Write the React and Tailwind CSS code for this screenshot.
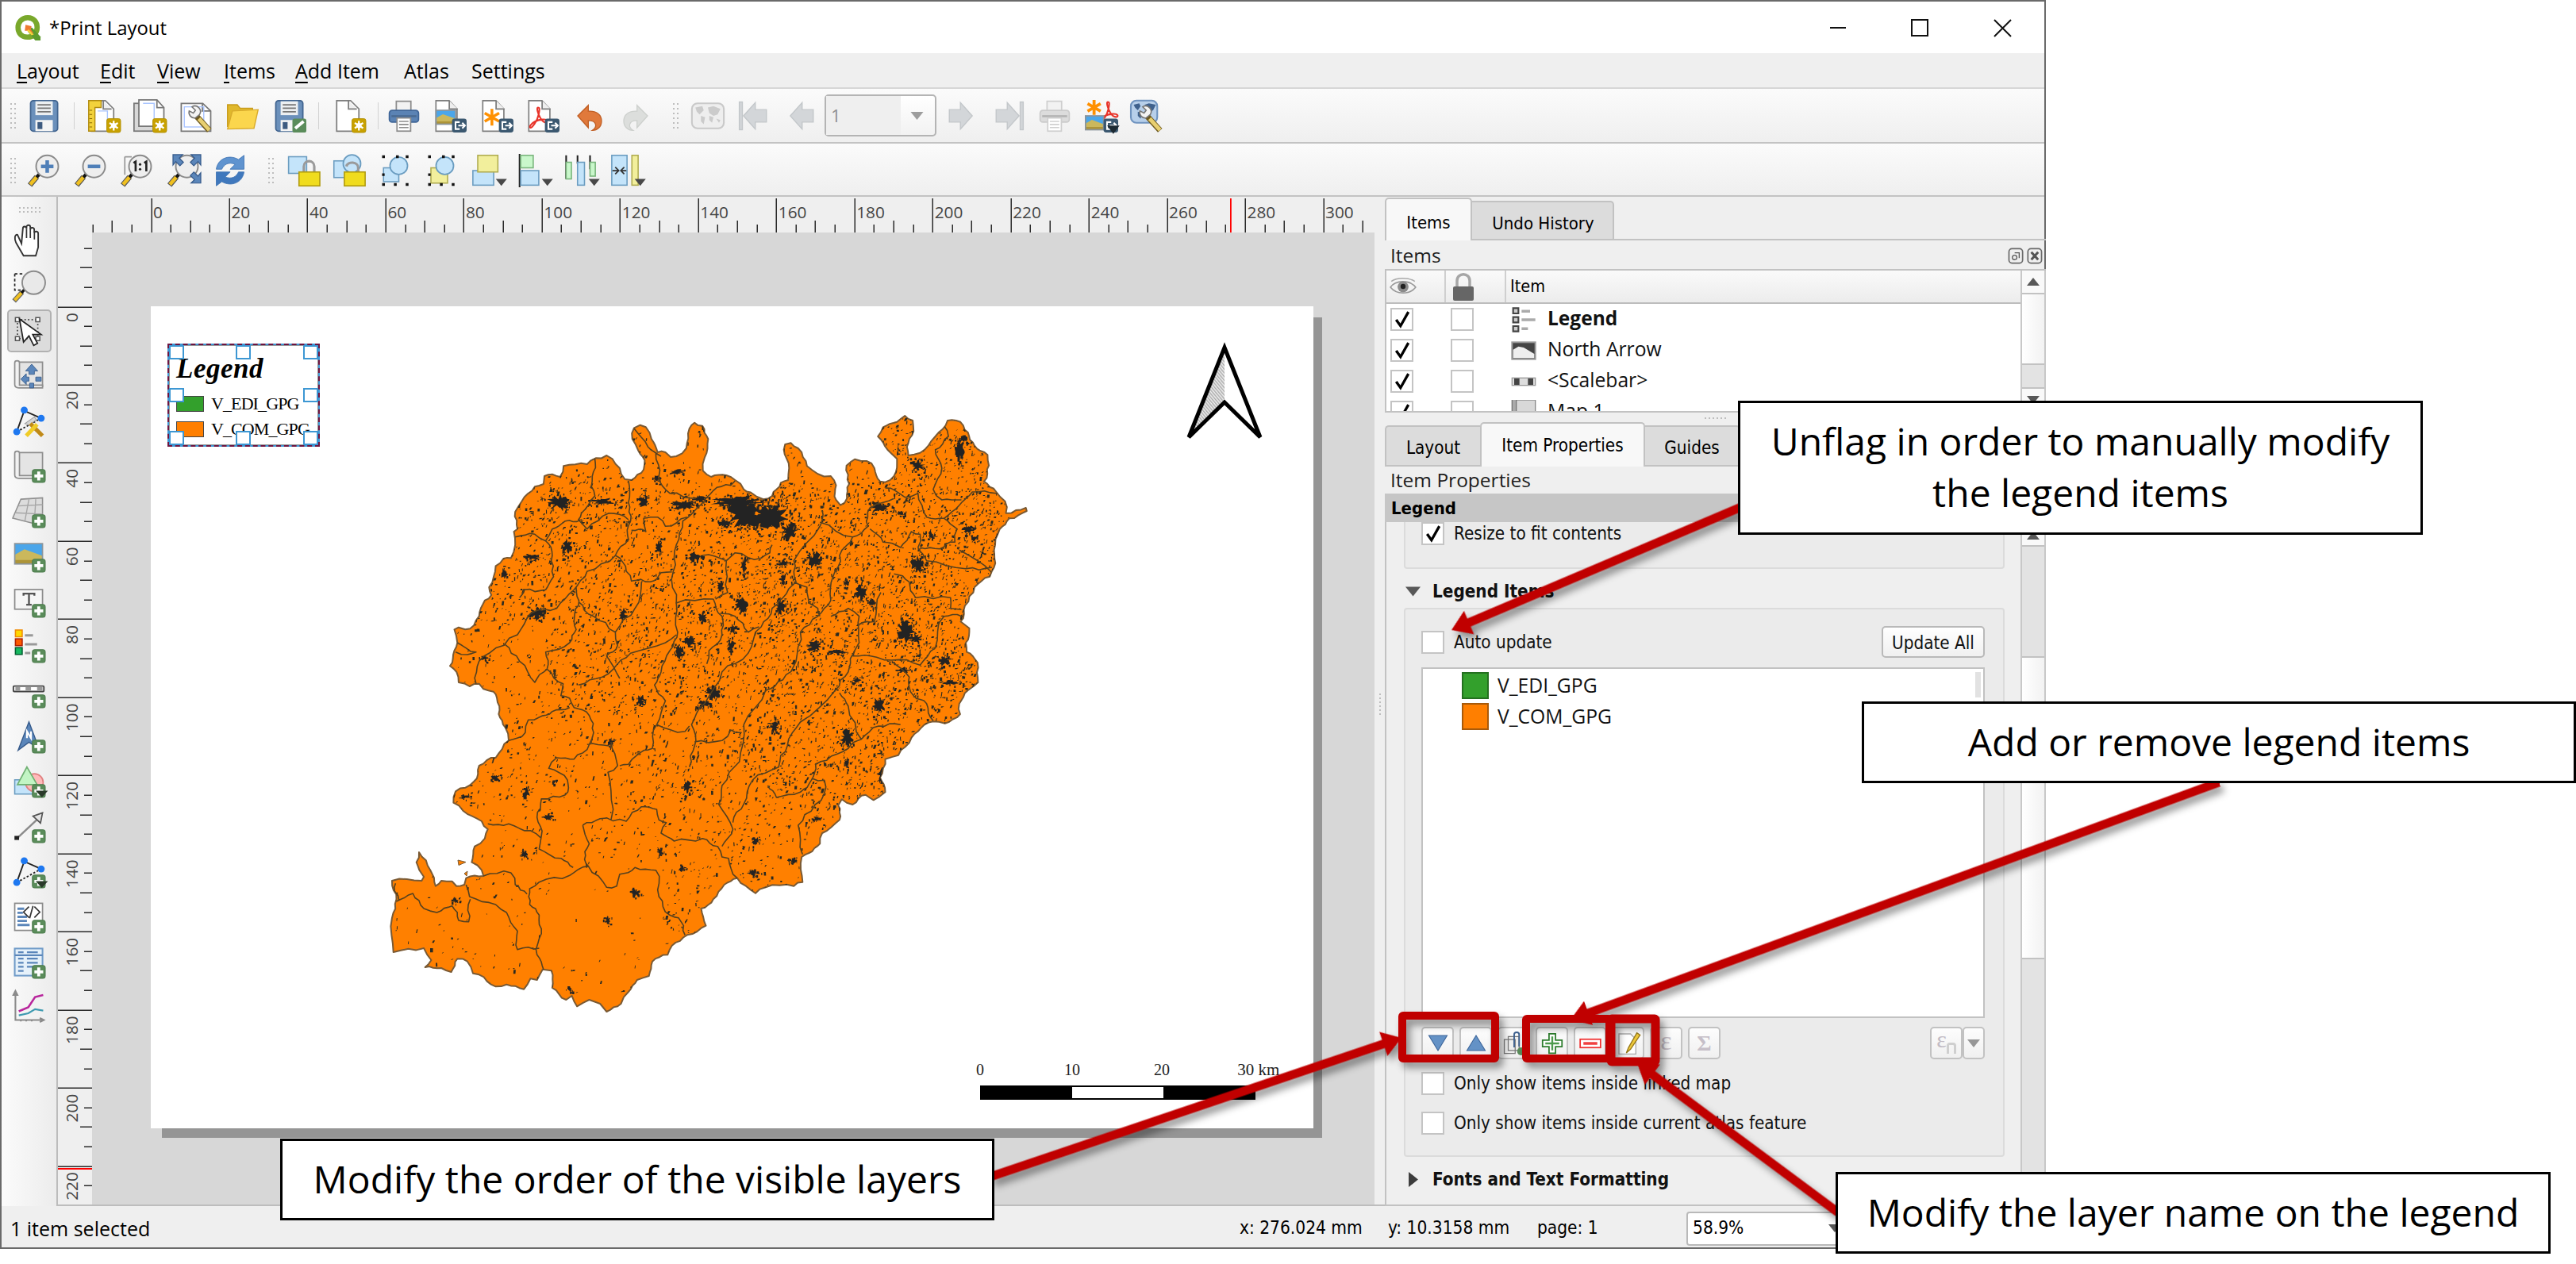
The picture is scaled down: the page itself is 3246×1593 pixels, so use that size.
import React from 'react';

/* ---------- deterministic map geometry ---------- */
function rng(seed) {
  let s = seed;
  return () => {
    s = (s * 1664525 + 1013904223) % 4294967296;
    return s / 4294967296;
  };
}
const px = (x) => x / 1.823 + 460;
const py = (y) => y / 3 + 500;

const OUTLINE = '195,1018 205,960 212,930 205,880 215,872 230,880 250,865 262,830 275,770 290,750 285,720 300,640 318,612 335,610 345,560 342,510 350,500 345,435 360,395 390,340 410,330 412,300 430,293 448,303 456,262 510,255 530,232 555,222 568,235 585,270 597,312 612,315 640,275 642,255 628,205 614,160 618,118 632,107 645,115 658,160 672,210 690,210 702,228 715,225 738,195 745,120 757,98 775,110 788,160 780,230 776,280 795,303 830,297 850,315 870,350 900,378 915,388 935,375 955,325 972,315 974,270 962,200 965,180 978,175 995,195 1015,262 1040,292 1070,300 1082,335 1082,390 1092,410 1107,385 1112,330 1106,260 1125,236 1152,243 1170,270 1183,320 1195,323 1215,300 1222,235 1200,200 1178,150 1190,115 1222,95 1240,72 1258,90 1260,130 1245,190 1248,222 1275,212 1310,150 1338,90 1358,90 1385,135 1400,185 1430,220 1433,260 1422,320 1450,360 1470,395 1472,440 1518,420 1520,432 1480,460 1458,500 1445,580 1445,645 1435,680 1400,720 1378,790 1368,850 1388,875 1380,930 1382,965 1407,1005 1408,1080 1385,1110 1365,1160 1367,1200 1332,1235 1305,1228 1285,1240 1255,1290 1225,1355 1195,1370 1183,1440 1195,1495 1168,1525 1150,1505 1120,1542 1095,1522 1087,1545 1090,1600 1050,1650 1045,1690 1020,1725 1003,1740 1005,1835 985,1850 920,1855 897,1877 875,1850 855,1820 825,1845 800,1900 772,1935 783,2000 740,2035 705,2075 695,2110 660,2135 652,2190 625,2205 605,2250 588,2295 555,2325 540,2295 515,2280 487,2305 475,2265 462,2280 430,2235 428,2170 408,2165 395,2205 380,2200 365,2240 345,2228 325,2222 300,2230 262,2185 248,2180 235,2135 212,2125 198,2175 175,2160 138,2157 152,2130 135,2085 65,2100 62,1970 72,1900 62,1830 130,1830 135,1815 118,1760 124,1722 150,1790 162,1850 175,1830 200,1832 210,1850 228,1845 232,1820 272,1812 268,1790 245,1760 252,1700 275,1670 282,1635 268,1605 225,1565 203,1535 208,1492 250,1455 262,1395 300,1365 330,1300 322,1250 307,1200 303,1140 295,1115 272,1105 262,1085 240,1095 215,1080 210,1040 195,1018';

const BORDERS = [
  '528,235 522,300 528,375 497,440 490,465 510,500 560,440 605,465',
  '605,318 605,400 610,470 605,540 575,600 510,660 480,730 440,800 380,820 350,900 285,970 262,1000 255,1085',
  '668,215 675,300 700,365 760,385',
  '850,318 840,335 800,355 770,410 730,470 715,560 708,660 715,780 718,890 700,960 680,1040 665,1090 690,1150 670,1240 660,1330 625,1355 605,1390 585,1395',
  '618,120 650,190 680,225',
  '345,530 390,520 415,545 430,600 433,680 415,730 365,730 355,760',
  '415,545 430,500 460,470 495,465',
  '575,600 600,660 612,697 655,700 680,665 705,662',
  '612,505 645,510 640,460 672,455 690,490 740,455',
  '485,720 490,790 480,850 485,880 470,930 415,965 418,1030 455,1085 450,1130 470,1140 480,1175 515,1205 525,1270 515,1315',
  '635,700 620,800 575,890 525,830 490,775',
  '575,890 580,940 555,980 585,1065',
  '320,935 355,1000 390,1080 418,1030',
  '470,1175 430,1190 400,1212 375,1222 368,1270 330,1300',
  '490,1090 545,1060 570,1030 610,970 690,930 715,900',
  '1050,430 1045,490 985,620 990,700 960,760 935,800 910,870 880,970 820,1040 780,1160 750,1240 757,1320 745,1400',
  '715,780 800,765 820,830 820,900 790,960 785,1010',
  '775,600 830,620 833,740 805,765',
  '830,620 850,590 910,610 930,590 935,560',
  '820,820 850,830 880,890 905,870',
  '1045,475 1120,530 1155,490 1160,420 1190,400 1215,385',
  '1120,530 1090,600 1075,680 1070,770 1040,830 1000,890 990,1000 960,1070 920,1110 870,1240 860,1380 820,1470 812,1540 845,1635 820,1700',
  '985,700 1015,720 1020,780 1040,800 1045,830',
  '1160,500 1190,550 1230,570 1255,510 1275,520 1270,570',
  '1195,345 1240,380 1270,365 1290,455 1330,460 1365,410 1395,360 1450,365',
  '1330,110 1340,150 1310,200 1325,270 1305,350 1325,390 1370,390',
  '1330,460 1360,500 1355,550 1320,575 1275,570',
  '1270,570 1290,620 1380,650 1440,645',
  '1365,580 1440,665',
  '1070,830 1110,800 1135,830 1135,930 1120,975 1110,1040 1080,1110 1000,1230 970,1320 950,1400 890,1450 870,1540 845,1610',
  '1120,980 1175,985 1245,995 1275,1015 1310,950 1330,830 1370,830',
  '1185,740 1170,850 1135,860',
  '1215,670 1250,700 1265,760 1345,760 1345,800 1370,805',
  '1210,1000 1250,1060 1260,1130 1290,1160 1305,1225',
  '1230,1240 1180,1245 1140,1295 1110,1330 1060,1375 1035,1390 1025,1450 1000,1495 945,1515 925,1470',
  '1090,1120 1110,1170 1140,1295',
  '1027,1443 1055,1450 1055,1500 1010,1580 995,1620 1005,1730',
  '670,1240 735,1265 745,1245',
  '757,1305 820,1300 840,1260 865,1270',
  '565,1305 580,1395 558,1420 570,1560 565,1600',
  '515,1315 480,1370 440,1365 422,1405 465,1450 460,1505 405,1520 395,1590 405,1660 400,1710 450,1745 478,1780',
  '510,1315 560,1320',
  '282,1615 330,1615 380,1640 405,1670',
  '500,1620 540,1595 600,1605 635,1550 670,1560 675,1600 692,1610 680,1650 710,1680 775,1670 810,1700 820,1740 835,1745 855,1820',
  '500,1620 515,1690 505,1720 513,1775 555,1855 578,1850 585,1805 620,1780 668,1790 675,1890 700,1960 720,1970 735,2035',
  '513,1775 470,1810 400,1835 378,1860 378,1920 400,1960 405,2030 395,2110 410,2165',
  '272,1812 335,1800 345,1845 372,1880',
  '232,1845 240,1890 300,1920 325,1950 350,2020 350,2090 400,2085',
  '72,1908 110,1878 135,1935 165,1950 200,1925 215,1980 238,1985 242,1900',
  '70,1840 68,1870 78,1905',
  '212,930 255,965 235,975 208,965',
];

const BLOBS = [
  [445, 400, 30, 28], [545, 395, 30, 14], [465, 565, 14, 28], [395, 818, 18, 22], [320, 670, 8, 22], [640, 395, 12, 20],
  [735, 410, 30, 26], [860, 400, 70, 26], [875, 445, 46, 56], [930, 450, 40, 48], [975, 510, 22, 34], [770, 388, 20, 12],
  [825, 480, 14, 20], [675, 565, 8, 26], [755, 605, 14, 20], [1035, 618, 16, 34], [1270, 262, 18, 22], [1365, 200, 12, 50],
  [1375, 160, 10, 14], [1180, 418, 24, 18], [1270, 635, 16, 34], [1140, 740, 18, 30], [1165, 778, 10, 14], [1240, 890, 22, 46], [1265, 915, 18, 16],
  [1035, 943, 20, 24], [865, 785, 14, 32], [953, 795, 12, 34], [592, 825, 8, 28], [775, 835, 10, 24], [745, 925, 18, 20],
  [722, 965, 10, 26], [840, 945, 8, 28], [800, 1120, 16, 34], [780, 1160, 16, 14], [1330, 998, 14, 20], [1238, 1035, 14, 10],
  [1180, 1170, 14, 34], [1130, 1072, 10, 12], [632, 1150, 8, 24], [940, 1250, 12, 22], [1108, 1290, 16, 34], [1108, 1385, 6, 20],
  [565, 1308, 8, 20], [368, 1503, 10, 22], [740, 1475, 10, 24], [230, 1512, 10, 8], [300, 1440, 10, 12], [365, 1730, 8, 16],
  [678, 1720, 8, 14], [620, 1875, 12, 16], [558, 1980, 8, 18], [208, 1905, 8, 10], [728, 1785, 8, 12], [1040, 1595, 10, 10],
  [898, 1680, 10, 16], [985, 1755, 8, 14], [1385, 500, 14, 16], [1300, 525, 8, 16], [870, 640, 8, 36], [1345, 1080, 20, 10],
  [275, 988, 10, 10], [715, 285, 18, 12], [670, 310, 8, 14], [1185, 1440, 5, 26], [1230, 440, 10, 8], [960, 630, 14, 12],
  [845, 880, 8, 20], [1085, 965, 24, 8], [385, 605, 20, 12], [815, 715, 8, 22], [960, 690, 8, 20], [1455, 540, 5, 34],
  [1105, 705, 6, 12], [1400, 535, 7, 12], [435, 1455, 4, 6], [890, 1800, 12, 10], [470, 2240, 6, 10], [422, 1590, 12, 14],
];

function parse(str) {
  return str.split(' ').map((p) => {
    const [a, b] = p.split(',').map(Number);
    return [px(a), py(b)];
  });
}
function rough(points, rand, amount) {
  let pts = points;
  for (let pass = 0; pass < 2; pass++) {
    const out = [pts[0]];
    for (let i = 1; i < pts.length; i++) {
      const [x0, y0] = pts[i - 1];
      const [x1, y1] = pts[i];
      const len = Math.hypot(x1 - x0, y1 - y0);
      if (len > 9) {
        const d = (rand() - 0.5) * Math.min(len * 0.3, amount);
        out.push([(x0 + x1) / 2 + ((y1 - y0) / len) * d, (y0 + y1) / 2 - ((x1 - x0) / len) * d]);
      }
      out.push([x1, y1]);
    }
    pts = out;
  }
  return 'M' + pts.map((p) => p[0].toFixed(1) + ' ' + p[1].toFixed(1)).join('L');
}
const r0 = rng(11);
const outlinePath = rough(parse(OUTLINE), r0, 4) + 'Z';
const borderPath = BORDERS.map((b) => rough(parse(b), r0, 6)).join('');

function density(x, y) {
  if (y < 320) return x > 1200 ? 0.7 : 0.3;
  if (y > 1750) return x > 680 ? 0.3 : x > 390 ? 0.06 : 0.07;
  if (y > 1560) return x > 850 ? 0.28 : x > 500 ? 0.24 : 0.13;
  if (y > 1200) {
    if (x > 860) return 0.7;
    if (x > 600) return 0.45;
    if (x > 400) return 0.22;
    return 0.36;
  }
  if (x < 420 && y > 850) return 0.22;
  if (x > 900) return 0.95;
  return 0.68;
}
function speckles() {
  const r = rng(77);
  let d = '';
  for (let i = 0; i < 19000; i++) {
    const x = 50 + r() * 1440;
    const y = 80 + r() * 2240;
    const w = 0.9 + r() * r() * 2.9;
    const h = 1 + r() * r() * 5;
    const s = (r() - 0.2) * -2.4;
    if (r() > density(x, y)) continue;
    d += `M${px(x).toFixed(1)} ${py(y).toFixed(1)}h${w.toFixed(1)}l${s.toFixed(1)} ${h.toFixed(1)}h${(-w).toFixed(1)}z`;
  }
  return d;
}
function blobs() {
  const r = rng(5);
  let d = '';
  BLOBS.forEach(([cx, cy, rx, ry]) => {
    const n = 26;
    const pts = [];
    for (let k = 0; k < n; k++) {
      const a = (k / n) * Math.PI * 2;
      const q = 0.35 + r() * 0.8;
      pts.push(px(cx + Math.cos(a) * rx * q).toFixed(1) + ' ' + py(cy + Math.sin(a) * ry * q).toFixed(1));
    }
    d += 'M' + pts.join('L') + 'Z';
    const extra = Math.round(6 + (rx * ry) / 40);
    for (let k = 0; k < extra; k++) {
      const a = r() * Math.PI * 2;
      const q = 0.5 + r() * 1;
      const w = 0.8 + r() * 2.2;
      const h = 0.8 + r() * 2.8;
      d += `M${px(cx + Math.cos(a) * rx * q).toFixed(1)} ${py(cy + Math.sin(a) * ry * q).toFixed(1)}h${w.toFixed(1)}v${h.toFixed(1)}h${(-w).toFixed(1)}z`;
    }
  });
  return d;
}
const specklePath = speckles();
const blobPath = blobs();

function RegionMap() {
  return (
    <svg className="absolute left-[290px] top-[130px]" width="830" height="770" viewBox="480 516 830 770">
      <defs>
        <clipPath id="region"><path d={outlinePath} /></clipPath>
      </defs>
      <path d={outlinePath} fill="#ff8000" stroke="#7a5a34" strokeWidth="2" strokeLinejoin="round" />
      <g clipPath="url(#region)">
        <path d={specklePath} fill="#2b2a20" />
        <path d={blobPath} fill="#232323" />
        <path d={borderPath} fill="none" stroke="#54401f" strokeWidth="1.6" strokeLinejoin="round" />
      </g>
      <path d="M577 1084l10 2.500-9 4zM585 1101l4-3-1 6z" fill="#ff8000" stroke="#7a5a34" />
    </svg>
  );
}

/* ---------- icon pieces ---------- */
function Ico({ children, s = 'size-[42px]' }) {
  return <svg viewBox="0 0 24 24" className={s + ' shrink-0 overflow-visible'} fill="none">{children}</svg>;
}
const Plus = () => (
  <g>
    <rect x="14.500" y="14.500" width="9.500" height="9.500" rx="1.800" fill="#5a8c5a" stroke="#4a7a4b" strokeWidth=".6" />
    <path d="M19.200 16v6.500M16 19.200h6.500" stroke="#fff" strokeWidth="2.200" />
  </g>
);
const Star = () => (
  <g>
    <rect x="14" y="14" width="10" height="10" rx="1.500" fill="#c8a100" stroke="#b08e00" strokeWidth=".5" />
    <path d="M19 15.500v7M16 17.200l6 3.600M22 17.200l-6 3.600" stroke="#fff" strokeWidth="1.300" />
    <circle cx="19" cy="19" r="1.900" fill="#fff" />
  </g>
);
const Exp = () => (
  <g>
    <rect x="13.500" y="14" width="10.500" height="10" rx="1.800" fill="#3b5870" />
    <path d="M19 16.500h-3v5h3M18 19h4.500M20.800 17l2 2-2 2" stroke="#fff" strokeWidth="1.200" />
  </g>
);
const Page = ({ x = 2 }) => (
  <g>
    <path d={`M${x} 1h10l6 6v16H${x}z`} fill="#fff" stroke="#7d7d7d" strokeWidth="1" transform={x === 2 ? 'scale(.95 1)' : undefined} />
    <path d="M11.500 1v6h6" fill="#eee" stroke="#7d7d7d" strokeWidth="1" />
  </g>
);
const Caret = () => <path d="M17 18h8l-4 5z" fill="#484848" />;
const Floppy = ({ children }) => (
  <Ico>
    <rect x="2" y="1" width="19.500" height="22" rx="2" fill="#6b90bb" stroke="#41648f" />
    <rect x="5.500" y="1.500" width="12.500" height="10" fill="#eceff1" />
    <path d="M7 4h9.500M7 6.500h9.500M7 9h9.500" stroke="#777" strokeWidth="1" />
    <rect x="5.500" y="15" width="12.500" height="8" fill="#f4f4f4" />
    <rect x="7" y="16.500" width="3.500" height="5" fill="#3d5b80" />
    {children}
  </Ico>
);
const Lens = ({ children, x = 14, y = 9, r = 8 }) => (
  <Ico>
    <path d="M1.500 22.500l5-6" stroke="#555" strokeWidth="4" />
    <path d="M1.800 22l4.800-5.600" stroke="#f0c020" strokeWidth="2.600" />
    <path d="M6.300 16.800l2.400-2.500" stroke="#111" strokeWidth="2.400" />
    <circle cx={x} cy={y} r={r} fill="#ededed" fillOpacity=".93" stroke="#8a8a8a" strokeWidth="1.100" />
    {children}
  </Ico>
);
const Wrench = () => (
  <g>
    <path d="M12 12.500l9 10" stroke="#6e5a20" strokeWidth="4.200" />
    <path d="M13.500 14l7.500 8.200" stroke="#e8cf70" strokeWidth="2.800" />
    <path d="M8.500 5.500a4 4 0 0 1 5.500 5.500l-3 2.500a4 4 0 0 1-4.500-5l3 1.500 1.500-2z" fill="#f4f4f4" stroke="#777" strokeWidth=".9" />
  </g>
);
const Printer = ({ body = '#5b83b4', edge = '#3f6597', paper = '#8c8c8c' }) => (
  <Ico>
    <rect x="6.500" y="1.500" width="10.500" height="8" fill="#f2f2f2" stroke={paper} />
    <rect x="1.500" y="8" width="21" height="8.500" rx="2" fill={body} stroke={edge} />
    <rect x="3" y="11.500" width="18" height="1.500" fill="#000" fillOpacity=".18" />
    <rect x="7" y="13.500" width="9.800" height="9.500" fill="#fff" stroke={paper} />
    <path d="M8.500 16h6.800M8.500 18.200h6.800M8.500 20.400h6.800" stroke={paper} strokeWidth=".9" />
  </Ico>
);
const Picture = ({ x = 1, y = 4, w = 21, h = 14 }) => (
  <g>
    <rect x={x} y={y} width={w} height={h} fill="#4ba6ea" />
    <path d={`M${x} ${y + h * 0.55}L${x + w * 0.35} ${y + h * 0.28}L${x + w} ${y + h * 0.6}V${y + h}H${x}z`} fill="#cbb85c" />
    <path d={`M${x} ${y + h * 0.8}H${x + w}V${y + h}H${x}z`} fill="#ad9438" />
    <rect x={x} y={y} width={w} height={h} stroke="#8b959c" strokeWidth="1" />
  </g>
);
const Flower = () => <path d="M8.500 7v12M3.300 10l10.400 6M13.700 10L3.300 16" stroke="#ff9000" strokeWidth="2" />;
const Acro = () => <path d="M8.500 6c-1 0-.5 4 2 8s6 3 5 1.500-6-1-9 .5S2 20 3 20.500 8 16 9 11s.5-5-.5-5z" stroke="#e8342a" strokeWidth="1.200" />;
const Scroll = () => (
  <g>
    <path d="M5 2h17v18H5" fill="#e4e4e4" stroke="#8d8d8d" />
    <path d="M1.500 2.500c0-2 3.500-2 3.500 0V19H22v2H4.500c-2 0-3-1-3-2.500z" fill="#f1f1f1" stroke="#8d8d8d" />
  </g>
);
const Nodes = () => (
  <g>
    <path d="M3 20L8.500 4.500 21 10" stroke="#222" strokeWidth="1.100" />
    <path d="M3 20L21 10" stroke="#222" strokeWidth="1.100" strokeDasharray="1.500 1.300" />
    <circle cx="3" cy="20" r="2.600" fill="#1e78f0" /><circle cx="8.500" cy="4" r="2.600" fill="#1e78f0" /><circle cx="21" cy="10" r="2.600" fill="#1e78f0" />
  </g>
);
const Handles = () => (
  <path d="M2 1h2v2H2zM19 1h2v2h-2zM2 21h2v2H2zM19 21h2v2h-2zM2 14h1.800v1.800H2zM10.500 21h2v2h-2zM12 1h2v2h-2z" fill="#111" />
);

const W = 'flex h-full w-[58.5px] shrink-0 items-center justify-center';
const Cell = ({ children }) => <div className={W}>{children}</div>;
const Sep = ({ c = 'w-[16.5px]' }) => (
  <div className={c + ' flex h-full shrink-0 items-center'}><div className="ml-[7px] h-[34px] w-px bg-[#d2d2d2]" /></div>
);
const Grip = ({ c = '' }) => (
  <div className={c + ' grid shrink-0 grid-cols-2 gap-x-[3px] gap-y-[4px]'}>
    {Array.from({ length: 12 }, (_, i) => <div key={i} className="size-[2px] bg-[#bdbdbd]" />)}
  </div>
);
const NavArrow = ({ flip, bar }) => (
  <Ico>
    <g fill="#d3d6d9" stroke="#c3c7ca" strokeWidth=".8" transform={flip ? 'translate(24 0) scale(-1 1)' : undefined}>
      <path d="M4.500 12L13 2.500V7.500h8V16.500h-8v5z" />
      {bar && <rect x="1.500" y="2" width="2.200" height="20" />}
    </g>
  </Ico>
);
const AtlasMap = ({ pale }) => (
  <g>
    <rect x={pale ? 0.5 : 0} y={pale ? 3 : 1} width={pale ? 23 : 19} height={pale ? 18 : 16} rx="4" fill={pale ? '#eee' : '#b7cfea'} stroke={pale ? '#c9c9c9' : '#6f93bf'} strokeWidth="1.200" />
    {pale ? (
      <path d="M3 6l5-1 1 3-3 3-2-2zM7 12l3 1-1 5-2-2zM12 6l4-1 5 2-2 4-3 1-3-2zM13 12l3 1-1 4-2-2zM18 14l3 1-1 2z" fill="#cbcbcb" />
    ) : (
      <path d="M2 4l4-1 1 2-2 3-2-2zM5 9l3 1-1 4-2-2zM10 4l3-1 5 1-2 4-2 1-3-2z" fill="#3f618d" />
    )}
  </g>
);

function MainToolbar() {
  return (
    <div className="flex h-[69px] w-full items-center border-b-2 border-[#c3c3c3] bg-gradient-to-b from-[#fbfbfb] to-[#efefef] pl-[11px]">
      <Grip c="mr-[7px]" />
      <Cell><Floppy /></Cell>
      <Sep c="w-[16px]" />
      <Cell>
        <Ico>
          <Page x={3} />
          <path d="M1 1h9v5H5.500v17H1z" fill="#f3d23b" stroke="#b08a10" strokeWidth=".8" />
          <path d="M1.500 8h2M1.500 11h2M1.500 14h2M1.500 17h2M1.500 20h2" stroke="#8a6a00" strokeWidth=".7" />
          <path d="M7.500 8.500h7v9" stroke="#a8c4ff" strokeWidth=".8" />
          <Star />
        </Ico>
      </Cell>
      <Cell>
        <Ico>
          <rect x=".5" y="3" width="17" height="20" fill="#d8d8d8" stroke="#777" />
          <path d="M4 .5h13l5 5.500v13.500H4z" fill="#fff" stroke="#777" />
          <path d="M17 .5V6h5" stroke="#777" />
          <path d="M7 3h8v13h8" stroke="#a8c4ff" strokeWidth=".8" />
          <Star />
        </Ico>
      </Cell>
      <Cell>
        <Ico>
          <path d="M.8 3h15.500L22 8.500V23H.8z" fill="#fff" stroke="#777" />
          <path d="M16 3v5.500h6" stroke="#777" />
          <rect x="3" y="5.500" width="14" height="14.500" stroke="#a8c4ff" strokeWidth=".8" />
          <Wrench />
        </Ico>
      </Cell>
      <Cell>
        <Ico>
          <path d="M1 20V4h7l2 2.500h9V10" fill="#e0b82c" stroke="#c89b1a" strokeWidth=".8" />
          <path d="M1 21.500L4.500 8.500 23 7.500l-3 13.500z" fill="#fbd64d" stroke="#d9ab2c" strokeWidth=".8" />
        </Ico>
      </Cell>
      <Cell>
        <Floppy>
          <rect x="14" y="14" width="10" height="10" rx="1.500" fill="#5a8c5a" />
          <path d="M16 21l6-5" stroke="#fff" strokeWidth="2.200" />
        </Floppy>
      </Cell>
      <Sep />
      <Cell><Ico><Page x={3} /><Star /></Ico></Cell>
      <Sep c="w-[10.5px]" />
      <Cell><Printer /></Cell>
      <Cell><Ico><Page /><Picture x={2} y={8} w={14} h={10} /><Exp /></Ico></Cell>
      <Cell><Ico><Page /><Flower /><Exp /></Ico></Cell>
      <Cell><Ico><Page /><Acro /><Exp /></Ico></Cell>
      <Cell>
        <Ico s="size-[40px]">
          <path d="M3 12L11 4v4.500c6-.5 10 2.500 10 7.500 0 4-3 7-7 7 1.500-1 3-2.500 2.500-4.500S14 15.500 11 15.500V21z" fill="#e0793b" stroke="#c05f25" strokeWidth=".8" />
        </Ico>
      </Cell>
      <Cell>
        <Ico s="size-[40px]">
          <path d="M21 12L13 4v4.500C7 8 3 11 3 16c0 4 3 7 7 7-1.500-1-3-2.500-2.500-4.500S10 15.500 13 15.500V21z" fill="#dcdedc" stroke="#cdd0cd" strokeWidth=".8" />
        </Ico>
      </Cell>
      <div className="w-[32px] shrink-0 pl-[17px]"><Grip c="w-[7px]" /></div>
      <Cell><Ico><AtlasMap pale /></Ico></Cell>
      <Cell><NavArrow bar /></Cell>
      <Cell><NavArrow /></Cell>
      <div className="ml-[1px] mr-[3px] flex h-[53px] w-[141px] shrink-0 items-center rounded-[5px] border-2 border-[#b4b4b4] bg-gradient-to-b from-white to-[#f2f2f2]">
        <div className="flex h-full w-[94px] items-center bg-[#efefef] pl-[6px] text-[22px] text-[#8f8f8f]">1</div>
        <svg viewBox="0 0 16 10" className="ml-[12px] h-[10px] w-[17px]"><path d="M0 0h16L8 10z" fill="#9d9d9d" /></svg>
      </div>
      <Cell><NavArrow flip /></Cell>
      <Cell><NavArrow flip bar /></Cell>
      <Cell><Printer body="#dcdcdc" edge="#cbcbcb" paper="#cfcfcf" /></Cell>
      <Cell>
        <Ico>
          <g transform="translate(-1 -4) scale(.9)"><path d="M8.500 5v12M3.300 8l10.400 6M13.700 8L3.300 14" stroke="#ff9000" strokeWidth="2.400" /></g>
          <g transform="translate(8 -4)"><Acro /></g>
          <Picture x={0.5} y={12} w={13} h={10} />
          <Exp />
          <path d="M16 19h9l-4.500 6z" fill="#1c2a33" />
        </Ico>
      </Cell>
      <Cell><Ico><AtlasMap /><Wrench /></Ico></Cell>
    </div>
  );
}

const Box = ({ x, y, w, h, f = '#c4e4fa', s = '#6a9cc0' }) => <rect x={x} y={y} width={w} height={h} fill={f} stroke={s} strokeWidth=".9" />;

function ActionsToolbar() {
  return (
    <div className="flex h-[67px] w-full items-center border-b-2 border-[#c3c3c3] bg-gradient-to-b from-[#fbfbfb] to-[#efefef] pl-[11px] pt-[2px]">
      <Grip c="mr-[7px]" />
      <Cell><Lens><path d="M14 4.500v9M9.500 9h9" stroke="#4f7fb8" strokeWidth="2.600" /></Lens></Cell>
      <Cell><Lens><path d="M9.500 9h9" stroke="#4f7fb8" strokeWidth="2.600" /></Lens></Cell>
      <Cell>
        <Lens>
          <path d="M3 2h5M3 2v13" stroke="#999" />
          <path d="M9.300 6.500l1.500-1v7M17 6.500l1.500-1v7" stroke="#222" strokeWidth="1.500" />
          <circle cx="14" cy="7.500" r=".9" fill="#222" /><circle cx="14" cy="11" r=".9" fill="#222" />
        </Lens>
      </Cell>
      <Cell>
        <Lens>
          <g fill="#5b86ba" stroke="#34598a" strokeWidth=".7">
            <path d="M4 .5h7L8.500 3l3 3-2.500 2.500-3-3L4 8z" /><path d="M24 .5h-7L19.500 3l-3 3L19 8.500l3-3L24 8z" /><path d="M24 21h-7l2.500-2.500-3-3L19 13l3 3 2-2.500z" />
          </g>
        </Lens>
      </Cell>
      <Cell>
        <Ico>
          <path d="M2 11C3 3.500 11 0 18 4l4-3v10H12l3.500-3.500C11 5.500 7.500 7.500 6 11z" fill="#5f93cf" stroke="#3f74b4" strokeWidth=".5" />
          <path d="M22 13c-1 7.500-9 11-16 7l-4 3V13h10l-3.500 3.500C13 18.500 16.500 16.500 18 13z" fill="#3f78bd" stroke="#3f74b4" strokeWidth=".5" />
        </Ico>
      </Cell>
      <div className="w-[33px] shrink-0 pl-[18px]"><Grip c="w-[7px]" /></div>
      <Cell>
        <Ico><Box x={1.500} y={2} w={13} h={12} /><path d="M12.500 13V9c0-5 7.500-5 7.500 0v4" stroke="#9a9a9a" strokeWidth="1.800" /><Box x={9} y={13} w={15} h={10} f="#f0dc1e" s="#b09a10" /></Ico>
      </Cell>
      <Cell>
        <Ico><Box x={1} y={5} w={11} h={12} /><circle cx="14" cy="7" r="6.300" fill="#c4e4fa" stroke="#6a9cc0" /><path d="M10 9c1-4 8.500-3.500 8.500 1v4" stroke="#9a9a9a" strokeWidth="1.800" /><Box x={8.500} y={13} w={15} h={10} f="#f0dc1e" s="#b09a10" /></Ico>
      </Cell>
      <Cell><Ico><Box x={3} y={10} w={11} h={10} /><circle cx="14" cy="8.500" r="6.300" fill="#c4e4fa" stroke="#6a9cc0" /><Handles /></Ico></Cell>
      <Cell><Ico><Box x={4} y={10} w={12} h={11} f="#f2ef9c" s="#b0ac50" /><circle cx="14" cy="8.500" r="6.300" fill="#c4e4fa" stroke="#6a9cc0" /><Handles /></Ico></Cell>
      <Cell><Ico><Box x={0.500} y={12} w={15} h={10.500} /><Box x={4} y={1} w={14.500} h={12} f="#f2ef9c" s="#b0ac50" /><Caret /></Ico></Cell>
      <Cell><Ico><path d="M1 0v24" stroke="#222" strokeWidth="1.200" /><Box x={1.800} y={1} w={9} h={9} f="#c9f7cb" s="#79b57c" /><Box x={1.800} y={12} w={13} h={10.500} /><Caret /></Ico></Cell>
      <Cell><Ico><path d="M.8 1v17M9 1v6M18 1v10" stroke="#222" strokeWidth="1.200" /><Box x={0.800} y={6} w={3.800} h={12} f="#c9f7cb" s="#79b57c" /><Box x={9} y={6} w={5} h={16.500} /><Box x={18} y={6} w={3.800} h={10} f="#c9f7cb" s="#79b57c" /><Caret /></Ico></Cell>
      <Cell><Ico><Box x={0.500} y={1} w={11} h={21.500} /><path d="M1 12h4M3 9.500L5.500 12 3 14.500M11 12H7.500M9.500 9.500L7 12l2.500 2.500" stroke="#333" /><Box x={15} y={1} w={4.500} h={21.500} f="#f2ef9c" s="#b0ac50" /><Caret /></Ico></Cell>
    </div>
  );
}

const C2 = ({ children, sel }) => (
  <div className="flex h-[56.8px] w-full items-center justify-center">
    <div className={sel ? 'flex h-[54px] w-[56px] items-center justify-center rounded-[5px] border-2 border-[#b1b1b1] bg-[#dcdcdc]' : 'flex'}>
      <Ico s="size-[41px]">{children}</Ico>
    </div>
  </div>
);

function ToolBox() {
  return (
    <div className="flex h-full w-[71px] shrink-0 flex-col border-r-2 border-[#bcbcbc] bg-gradient-to-r from-[#fbfbfb] to-[#ececec] pt-[13px]">
      <div className="mb-[7px] ml-[22px] grid w-[30px] grid-cols-6 gap-y-[3px]">
        {Array.from({ length: 12 }, (_, i) => <div key={i} className="size-[2px] bg-[#bdbdbd]" />)}
      </div>
      <C2><path d="M8 23L2.500 13.500C1 10.500 1.500 7 3.500 7.500L6.500 14 7.500 3c0-2 2.500-2 2.700 0V1.800c0-1.800 2.700-1.800 2.800 0V3.500c.3-1.800 3-1.500 2.900.5v2c.5-1.400 3-1.200 2.900.8v10L17 23z" fill="#fff" stroke="#333" strokeWidth="1.100" /><path d="M10.200 3v7M13 3v7M16 5v6" stroke="#333" /></C2>
      <C2><path d="M1.500 3h7M1.500 3v12h6" stroke="#222" strokeDasharray="2 1.600" /><path d="M1 23l6-6.500" stroke="#666" strokeWidth="3.600" /><path d="M1.500 22.500L6.500 17" stroke="#f0c020" strokeWidth="2.300" /><path d="M6.500 17l2-2.300" stroke="#111" strokeWidth="2" /><circle cx="15.500" cy="9.500" r="8.500" fill="#e8e8e8" fillOpacity=".95" stroke="#8a8a8a" strokeWidth="1.100" /></C2>
      <C2 sel><rect x="3.500" y="4" width="15" height="14" stroke="#444" strokeDasharray="1 1.600" /><path d="M2 2.500h3v3H2zM17 2.500h3v3h-3zM2 16.500h3v3H2zM17 16.500h3v3h-3z" fill="#fff" stroke="#555" strokeWidth=".9" /><path d="M5 3.500l3 17 4-4.500 3.500 7 2.800-1.500-3.500-6.500h6.200z" fill="#fff" stroke="#222" /></C2>
      <C2><Scroll /><path d="M14 3.500l4.500 5H16V11h-4V8.500H9.500zM6 14.500l4-4V13h2v3h-2v2.500zM17 13h4v3h-4zM12.500 17.500h3V21h-3z" fill="#5b86ba" stroke="#34598a" strokeWidth=".5" /></C2>
      <C2><Nodes /><path d="M9 14l7-5 1.500 2-5 4z" fill="#d5d5d5" stroke="#999" strokeWidth=".6" /><path d="M13 14l9 9" stroke="#c08a18" strokeWidth="3" /><path d="M18 14.500l-8 8.500" stroke="#f0cc28" strokeWidth="3" /></C2>
      <C2><Scroll /><Plus /></C2>
      <C2><path d="M6 3L22 2v16L16 21 0 17z" fill="#dcdcdc" stroke="#909090" strokeWidth=".9" /><path d="M4 8l18-1M2 13l20 1M12 3L9 19M17 3l-1 17" stroke="#a5a5a5" strokeWidth=".8" /><Plus /></C2>
      <C2><Picture x={1.500} y={3} w={20.500} h={15} /><Plus /></C2>
      <C2><rect x="1.500" y="3.500" width="20.500" height="14.500" fill="#f6f6f6" stroke="#8a8a8a" /><path d="M8 8V6.500h8V8M12 6.500v8M10 14.700h4" stroke="#555" strokeWidth="1.400" /><Plus /></C2>
      <C2><g strokeWidth=".9"><rect x="2" y="0" width="5" height="5" fill="#ffd800" stroke="#f08a00" /><rect x="2" y="6.500" width="5" height="5" fill="#ff5a00" stroke="#b02000" /><rect x="2" y="13" width="5" height="5" fill="#18b860" stroke="#006030" /></g><path d="M9 4h6M9 10.500h9M9 17h4" stroke="#999" strokeWidth="1.800" /><Plus /></C2>
      <C2><rect x=".5" y="8" width="22.500" height="4" rx=".6" fill="#fff" stroke="#444" strokeWidth="1.100" /><path d="M2 10h3.500M9.500 10h4M18 10h4" stroke="#999" strokeWidth="2.400" /><Plus /></C2>
      <C2><path d="M12 1l7.500 20L12 16l-8 6z" fill="#5b86ba" stroke="#34598a" strokeWidth=".8" /><path d="M10.500 13V8l3 5V8" stroke="#fff" strokeWidth="1.300" /><Plus /></C2>
      <C2><Box x={1.500} y={11} w={14} h={10.500} /><circle cx="16" cy="13" r="6.500" fill="#fbb" stroke="#e08080" /><path d="M10.500 1.500L18 14.500H3.500z" fill="#c2f5c4" stroke="#6fb072" /><Plus /><path d="M17 20h9l-4.500 5z" fill="#2a3a2a" transform="translate(0 -1)" /></C2>
      <C2><path d="M3 21L20 5" stroke="#8a8a8a" strokeWidth="1.400" /><path d="M22 2l-7 2.500 5.500 5z" fill="#e5e5e5" stroke="#555" /><rect x="1.300" y="19" width="3.400" height="3" fill="#222" /><Plus /></C2>
      <C2><Nodes /><Plus /><path d="M17 20h9l-4.500 5z" fill="#2a3a2a" transform="translate(0 -1)" /></C2>
      <C2><rect x="1.500" y="2" width="20.500" height="20" fill="#fff" stroke="#8a8a8a" /><path d="M3.500 6h5M3.500 9h4M3.500 12h7M3.500 15h7M3.500 18h9" stroke="#5b86ba" strokeWidth="1.700" /><path d="M12 4.500L8 8.500l4 4M16 4.500l4 4-4 4M15 4l-2.500 9" stroke="#333" /><Plus /></C2>
      <C2><rect x="1.500" y="2" width="20.500" height="20" fill="#e6f1fa" stroke="#6f9bc8" strokeWidth="1.200" /><path d="M1.500 7h20.500M4 4.700h4M10.500 4.700h8M4 9.500h4M10.500 9.500h8M4 12.500h4M10.500 12.500h8M4 15.500h4M10.500 15.500h5M4 18.500h4" stroke="#5b86ba" strokeWidth="1.300" /><Plus /></C2>
      <C2><path d="M2 2v20h20M.5 3.500L2 .5l1.500 3zM20 20.500l3 1.500-3 1.500M6 22v1M10 22v1M14 22v1" stroke="#8a8a8a" strokeWidth="1.200" /><path d="M4.500 15.500l7-3 5-7.500 6-1.500" stroke="#b8259c" strokeWidth="1.500" /><path d="M4.500 18.500l7-1.500 5-3 6 1" stroke="#3e9ab0" strokeWidth="1.300" /></C2>
    </div>
  );
}

/* ---------- rulers ---------- */
const MM = 4.9235;
function TopRuler() {
  const t = [];
  for (let m = -15; m <= 310; m += 5) t.push(m);
  return (
    <svg className="h-[45px] w-[1659px] shrink-0" viewBox="73 248 1659 45">
      {t.map((m) => {
        const x = Math.round(190.500 + m * MM);
        const top = m % 20 === 0 ? 250 : m % 10 === 0 ? 278 : 283;
        return <rect key={m} x={x - 0.500} y={top} width="1.500" height={293 - top} fill="#2a2a2a" />;
      })}
      {t.filter((m) => m >= 0 && m % 20 === 0).map((m) => (
        <text key={m} x={193 + m * MM} y="275" fontSize="20.800" fill="#444">{m}</text>
      ))}
      <rect x="1550" y="250" width="1.800" height="43" fill="#f00" />
    </svg>
  );
}
function SideRuler() {
  const t = [];
  for (let m = -15; m <= 225; m += 5) t.push(m);
  return (
    <svg className="h-[1225px] w-[43px] shrink-0" viewBox="73 293 43 1225">
      {t.map((m) => {
        const y = Math.round(386.500 + m * MM);
        const left = m % 20 === 0 ? 73 : m % 10 === 0 ? 101 : 106;
        return <rect key={m} x={left} y={y - 0.500} width={116 - left} height="1.500" fill="#2a2a2a" />;
      })}
      {t.filter((m) => m >= 0 && m % 20 === 0).map((m) => {
        const n = String(m).length;
        const y = 386.500 + m * MM + 7.500 + n * 11.900;
        return <text key={m} transform={`translate(97.500 ${y}) rotate(-90)`} fontSize="20.800" fill="#444">{m}</text>;
      })}
      <rect x="73" y="1472" width="43" height="2" fill="#f00" />
    </svg>
  );
}

/* ---------- layout page ---------- */
const K = ({ c }) => <div className={c + ' absolute h-[18px] w-[19px] border-2 border-[#3d97d3] bg-white'} />;
function Sheet() {
  return (
    <div className="relative h-full w-[1616px] shrink-0 overflow-hidden bg-[#d7d7d7]">
      <div className="absolute left-[88px] top-[107px] h-[1034px] w-[1462px] bg-[#959595]" />
      <div className="absolute left-[74px] top-[93px] h-[1036px] w-[1465px] bg-white">
        <div className="absolute left-[21px] top-[47px] h-[130px] w-[192px] border-2 border-[#3d97d3]">
          <div className="absolute -inset-[2px] border-2 border-dashed border-[#6d1440]" />
          <div className="flex size-full flex-col border border-[#999] pl-[8px] pt-[4px] font-['Liberation_Serif',serif] leading-none text-black">
            <div className="flex h-[48px] items-center text-[35px] font-bold italic tracking-[0.5px]">Legend</div>
            <div className="mt-[11px] flex h-[20px] items-center">
              <div className="h-[20px] w-[35px] border border-[#444] bg-[#33a02c]" />
              <div className="ml-[9px] whitespace-nowrap text-[22px] tracking-[-0.9px]">V_EDI_GPG</div>
            </div>
            <div className="mt-[12px] flex h-[20px] items-center">
              <div className="h-[20px] w-[35px] border border-[#444] bg-[#ff7f00]" />
              <div className="ml-[9px] whitespace-nowrap text-[22px] tracking-[-0.9px]">V_COM_GPG</div>
            </div>
          </div>
          <K c="left-0 top-0" /><K c="left-[84px] top-0" /><K c="right-0 top-0" />
          <K c="left-0 top-[54px]" /><K c="right-0 top-[54px]" />
          <K c="bottom-0 left-0" /><K c="bottom-0 left-[84px]" /><K c="bottom-0 right-0" />
        </div>
        <RegionMap />
        <svg className="absolute left-[1300px] top-[40px]" width="110" height="135" viewBox="1490 426 110 135">
          <defs>
            <pattern id="hatch" width="3" height="3" patternUnits="userSpaceOnUse" patternTransform="rotate(-40)">
              <rect width="3" height="3" fill="#efefef" /><rect width="1.400" height="3" fill="#a8a8a8" />
            </pattern>
          </defs>
          <path d="M1543 438L1499 551 1543 507z" fill="url(#hatch)" />
          <path d="M1543 438L1588 551 1543 507 1498 551z" fill="none" stroke="#000" strokeWidth="5" />
        </svg>
        <div className="absolute left-[1037px] top-[951px] flex w-[410px] flex-col font-['Liberation_Serif',serif] text-[20px] leading-[22px] text-[#222]">
          <div className="flex">
            <div className="w-[116px] pl-[3px]">0</div>
            <div className="w-[115px] pl-[1px]">10</div>
            <div className="w-[110px] pl-[2px]">20</div>
            <div className="w-[80px] text-[21px]">30 km</div>
          </div>
          <div className="ml-[8px] mt-[9px] flex h-[18px] w-[347px] border-2 border-black">
            <div className="flex-1 bg-black" /><div className="flex-1 bg-white" /><div className="flex-1 bg-black" />
          </div>
        </div>
      </div>
    </div>
  );
}

/* ---------- dock panels ---------- */
const Check = ({ on, c = '' }) => (
  <div className={c + ' flex h-[29px] w-[29px] shrink-0 items-center justify-center border-2 border-[#c4c4c4] bg-white'}>
    {on && <svg viewBox="0 0 20 20" className="size-[22px]" fill="none"><path d="M3 10l5 7L17 1" stroke="#000" strokeWidth="3" /></svg>}
  </div>
);
const Tah = "font-['DejaVu_Sans_Condensed','DejaVu_Sans',sans-serif]";

const ROWS = [
  { n: 'Legend', b: true, i: <g><path d="M2 1h5v5H2zM2 9.500h5v5H2zM2 18h5v5H2z" fill="#ccc" stroke="#444" strokeWidth="1.600" /><path d="M10 4h8M10 12h13M10 20.500h6" stroke="#aaa" strokeWidth="2.600" /></g> },
  { n: 'North Arrow', i: <g><rect x="1" y="4" width="22" height="16" fill="#444" stroke="#999" strokeWidth="1.500" /><path d="M2 19v-8l5-3 5 1 10 6v4z" fill="#eee" /></g> },
  { n: '<Scalebar>', i: <g><rect x="1" y="8.500" width="22" height="7" fill="#ddd" stroke="#999" /><path d="M3 9h5v6H3zM16 9h5v6h-5z" fill="#444" /></g> },
  { n: 'Map 1', i: <g><rect x="4" y="0" width="19" height="24" fill="#d8d8d8" stroke="#888" /><rect x="1" y="-1" width="4" height="25" fill="#aaa" stroke="#777" /></g> },
];

const Arrow = ({ d, c }) => <svg viewBox="0 0 16 10" className={c}><path d={d} fill="#585858" /></svg>;

function ItemsDock() {
  return (
    <div className="flex h-[272px] flex-col">
      <div className={'flex h-[55px] items-end border-b-2 border-[#c2c2c2] text-[22px] leading-none text-black ' + Tah}>
        <div className="-mb-[2px] flex h-[54px] w-[110px] items-center justify-center rounded-t-[5px] border-2 border-b-0 border-[#c2c2c2] bg-[#f8f8f8] pt-[7px]">Items</div>
        <div className="flex h-[48px] w-[179px] items-center justify-center rounded-tr-[5px] border-r-2 border-t-2 border-[#c2c2c2] bg-[#dcdcdc] pl-[2px] pt-[7px]">Undo History</div>
      </div>
      <div className="flex h-[36px] items-center pl-[7px] pr-[3px] pt-[2px] text-[24.5px] text-[#1e1e1e]">
        <span className="flex-1">Items</span>
        <svg viewBox="0 0 46 22" className="h-[21px] w-[46px]" fill="none">
          <rect x="1.500" y="1.500" width="18" height="19" rx="4" stroke="#6a6a6a" strokeWidth="1.800" /><circle cx="9" cy="13" r="3" stroke="#555" strokeWidth="1.400" /><path d="M9 7h6v7" stroke="#555" strokeWidth="1.400" />
          <rect x="26.500" y="1.500" width="18" height="19" rx="4" stroke="#6a6a6a" strokeWidth="1.800" /><path d="M31 6l9 10M40 6l-9 10" stroke="#555" strokeWidth="3.200" />
        </svg>
      </div>
      <div className="flex h-[181px] border-2 border-r-0 border-[#c2c2c2] bg-white">
        <div className="flex flex-1 flex-col overflow-hidden">
          <div className={'flex h-[42px] shrink-0 items-center border-b-2 border-[#bdbdbd] bg-gradient-to-b from-[#fafafa] to-[#ececec] text-[21.5px] ' + Tah}>
            <div className="flex h-full w-[75px] items-center border-r-2 border-[#cfcfcf] pl-[3px]">
              <svg viewBox="0 0 34 26" className="h-[28px] w-[36px]" fill="none"><path d="M2 14C8 5 25 5 32 14 25 23 9 23 2 14z" fill="#f2f2f2" stroke="#999" strokeWidth="1.500" /><path d="M3 7C9 2 24 2 31 7" stroke="#aaa" strokeWidth="1.500" /><circle cx="17" cy="13.500" r="6.500" fill="#8b8b8b" /><circle cx="17" cy="13" r="3" fill="#222" /></svg>
            </div>
            <div className="flex h-full w-[76px] items-center border-r-2 border-[#cfcfcf] pl-[8px] pt-[2px]">
              <svg viewBox="0 0 28 36" className="h-[36px] w-[28px]" fill="none"><path d="M6 18V10c0-11 16-11 16 0v8" stroke="#a6a6a6" strokeWidth="3.500" /><rect x="1" y="17" width="26" height="18" rx="2" fill="#666" /></svg>
            </div>
            <span className="pl-[5px]">Item</span>
          </div>
          {ROWS.map((r) => (
            <div key={r.n} className="flex h-[39px] shrink-0 items-center pl-[5px] text-[24.7px] leading-[30px] text-[#111]">
              <Check on />
              <Check c="ml-[47px]" />
              <svg viewBox="0 0 24 24" className="ml-[47px] h-[32px] w-[32px]" fill="none">{r.i}</svg>
              <span className={r.b ? 'ml-[14px] mt-[-3px] text-[24.5px] font-bold' : 'ml-[14px] mt-[-3px]'}>{r.n}</span>
            </div>
          ))}
        </div>
        <div className="flex w-[32px] shrink-0 flex-col border-x-2 border-[#c8c8c8] bg-[#e3e3e3]">
          <div className="flex h-[30px] items-center justify-center border-b-2 border-[#c2c2c2] bg-[#f9f9f9]"><Arrow d="M0 10h16L8 0z" c="h-[10px] w-[16px]" /></div>
          <div className="h-[89px] border-b-2 border-[#c2c2c2] bg-gradient-to-r from-white to-[#f2f2f2]" />
          <div className="h-[30px] border-b-2 border-[#c2c2c2]" />
          <div className="flex flex-1 justify-center bg-[#f9f9f9] pt-[9px]"><Arrow d="M0 0h16L8 10z" c="h-[10px] w-[16px]" /></div>
        </div>
      </div>
    </div>
  );
}

const Btn = ({ children, c = 'w-[41px]' }) => (
  <div className={c + ' flex h-[41px] shrink-0 items-center justify-center rounded-[5px] border-2 border-[#c2c2c2] bg-gradient-to-b from-[#fdfdfd] to-[#f0f0f0]'}>{children}</div>
);

function PropertiesDock() {
  return (
    <div className="flex flex-1 flex-col">
      <div className="flex h-[13px] items-center justify-center gap-[3px]">
        {Array.from({ length: 6 }, (_, i) => <div key={i} className="size-[2px] bg-[#bdbdbd]" />)}
      </div>
      <div className={'flex h-[55px] items-end border-b-2 border-[#c2c2c2] leading-none text-black text-[22.3px] ' + Tah}>
        <div className="flex h-[50px] w-[120px] items-center justify-center rounded-tl-[5px] border-l-2 border-t-2 border-[#c2c2c2] bg-[#dcdcdc] pt-[4px]">Layout</div>
        <div className="-mb-[2px] flex h-[56px] w-[208px] items-center justify-center rounded-t-[5px] border-2 border-b-0 border-[#c2c2c2] bg-[#f8f8f8]">Item Properties</div>
        <div className="flex h-[50px] w-[120px] items-center justify-center rounded-tr-[5px] border-r-2 border-t-2 border-[#c2c2c2] bg-[#dcdcdc] pt-[4px]">Guides</div>
      </div>
      <div className="flex h-[34px] items-center pl-[7px] pt-[1px] text-[24.5px] leading-none text-[#1e1e1e]">Item Properties</div>
      <div className={'flex h-[36px] items-center bg-[#c6c6c6] pl-[8px] text-[22px] font-bold text-black ' + Tah}>Legend</div>
      <div className={'flex flex-1 border-b-2 border-l-2 border-[#c2c2c2] text-[22.3px] leading-none text-[#111] ' + Tah}>
        <div className="flex flex-1 flex-col pl-[22px] pr-[20px]">
          <div className="h-[59px] overflow-hidden rounded-b-[4px] border-2 border-t-0 border-[#dbdbdb] bg-[#ebebeb] pl-[20px]">
            <div className="flex items-center gap-[12px]"><Check on />Resize to fit contents</div>
          </div>
          <div className="flex h-[49px] items-center pt-[8px] font-bold">
            <Arrow d="M0 0h16L8 10z" c="ml-[2px] mr-[15px] h-[13px] w-[19px]" />Legend Items
          </div>
          <div className="flex h-[692px] flex-col rounded-[4px] border-2 border-[#dbdbdb] bg-[#ebebeb] pl-[20px] pr-[23px] pt-[21px]">
            <div className="flex h-[40px] items-center">
              <Check /><span className="ml-[12px] flex-1">Auto update</span>
              <div className="flex h-[40px] w-[130px] items-center justify-center rounded-[5px] border-2 border-[#b9b9b9] bg-gradient-to-b from-white to-[#f0f0f0] pt-[2px]">Update All</div>
            </div>
            <div className="mt-[12px] flex h-[442px] w-[710px] border-2 border-[#c2c2c2] bg-white font-['Open_Sans',sans-serif] text-[24.7px]">
              <div className="flex flex-1 flex-col pl-[49px] pt-[1px]">
                <div className="flex h-[39px] items-center gap-[11px] leading-[30px]"><div className="h-[34px] w-[34px] border-2 border-[#23701f] bg-[#33a02c]" />V_EDI_GPG</div>
                <div className="flex h-[39px] items-center gap-[11px] leading-[30px]"><div className="h-[34px] w-[34px] border-2 border-[#a85a0a] bg-[#ff7f00]" />V_COM_GPG</div>
              </div>
              <div className="mr-[3px] mt-[4px] h-[32px] w-[7px] bg-[#e2e2e2]" />
            </div>
            <div className="mt-[11px] flex w-[710px] gap-[7px]">
              <Btn><svg viewBox="0 0 24 20" className="h-[21px] w-[26px]"><path d="M1 1h22L12 19z" fill="#6492c6" stroke="#3a6398" /></svg></Btn>
              <Btn><svg viewBox="0 0 24 20" className="h-[21px] w-[26px]"><path d="M1 19h22L12 1z" fill="#6492c6" stroke="#3a6398" /></svg></Btn>
              <Btn><Ico s="size-[30px]"><path d="M2 8h11v14H2zM6 5h11v14H6z" fill="#eee" stroke="#777" /><path d="M12 16V3c0-3 5-3 5 0v12" stroke="#3c5f8d" strokeWidth="1.500" /><circle cx="19" cy="20" r="4" fill="#5a8c5a" /></Ico></Btn>
              <Btn><Ico s="size-[28px]"><path d="M8.500 1.500h7v7h7v7h-7v7h-7v-7h-7v-7h7z" fill="#fff" stroke="#2c7c2c" strokeWidth="1.500" /><path d="M12 4.500v15M4.500 12h15" stroke="#4c9a4c" strokeWidth="2" /></Ico></Btn>
              <Btn><Ico s="size-[28px]"><rect x="1" y="7.500" width="22" height="9" fill="#fff" stroke="#f03030" strokeWidth="1.500" /><rect x="4.500" y="10.500" width="15" height="3" fill="#f04040" /></Ico></Btn>
              <Btn><Ico s="size-[32px]"><path d="M3 3h11l5 5v14H3z" fill="#fff" stroke="#aaa" /><path d="M20 2l-8 14-2 5 4-3.500L23 4z" fill="#eec93a" stroke="#96781c" /></Ico></Btn>
              <Btn><span className="mt-[-6px] font-['Liberation_Serif',serif] text-[34px] text-[#c6bfc8]">ε</span></Btn>
              <Btn><span className="font-['Liberation_Serif',serif] text-[28px] font-bold text-[#c6bfc8]">Σ</span></Btn>
              <div className="ml-auto flex">
                <Btn><span className="mt-[-10px] font-['Liberation_Serif',serif] text-[30px] text-[#c2bcc4]">ε</span><span className="mt-[12px] h-[14px] w-[12px] rounded-t-[4px] border-[3px] border-b-0 border-[#cfcfcf]" /></Btn>
                <Btn c="w-[28px]"><Arrow d="M0 0h16L8 10z" c="h-[10px] w-[16px] opacity-60" /></Btn>
              </div>
            </div>
            <div className="mt-[15px] flex h-[30px] items-center gap-[12px]"><Check />Only show items inside linked map</div>
            <div className="mt-[20px] flex h-[30px] items-center gap-[12px]"><Check />Only show items inside current atlas feature</div>
          </div>
          <div className="flex h-[57px] items-center font-bold">
            <svg viewBox="0 0 10 16" className="ml-[5px] mr-[17px] h-[19px] w-[14px]"><path d="M0 0v16l10-8z" fill="#3c3c3c" /></svg>Fonts and Text Formatting
          </div>
        </div>
        <div className="flex w-[32px] shrink-0 flex-col border-x-2 border-[#c8c8c8] bg-[#e3e3e3]">
          <div className="flex h-[31px] items-center justify-center border-b-2 border-[#c2c2c2] bg-[#f9f9f9] pt-[4px]"><Arrow d="M0 10h16L8 0z" c="h-[10px] w-[16px]" /></div>
          <div className="h-[140px] border-b-2 border-[#c2c2c2]" />
          <div className="h-[380px] border-b-2 border-[#c2c2c2] bg-gradient-to-r from-white to-[#f2f2f2]" />
        </div>
      </div>
    </div>
  );
}

/* ---------- annotations ---------- */
function Callout({ c, children }) {
  return <div className={c + ' absolute flex flex-col items-center justify-center border-[3px] border-black bg-white pb-[3px] text-center text-[48px] leading-[65px] whitespace-nowrap text-black'}>{children}</div>;
}
function ArrowTo({ x1, y1, x2, y2 }) {
  const l = Math.hypot(x2 - x1, y2 - y1);
  const a = (Math.atan2(y2 - y1, x2 - x1) * 180) / Math.PI;
  return <path transform={`translate(${x1} ${y1}) rotate(${a})`} d={`M0 -5.500H${l - 24}V-16L${l} 0L${l - 24} 16V5.500H0z`} fill="#c00000" />;
}
const MENU = [['L', 'ayout', 'w-[105px]'], ['E', 'dit', 'w-[72px]'], ['V', 'iew', 'w-[84px]'], ['I', 'tems', 'w-[90px]'], ['A', 'dd Item', 'w-[137px]'], ['', 'Atlas', 'w-[85px]'], ['', 'Settings', 'w-[120px]']];

export default function App() {
  return (
    <div className="relative h-[1593px] w-[3246px] overflow-hidden bg-white font-['Open_Sans','Noto_Sans',sans-serif] text-black">
      <div className="flex h-[1574px] w-[2578px] flex-col border-2 border-[#6a6a6a] bg-[#efefef]">
        <div className="flex h-[65px] shrink-0 items-center bg-white pl-[15px]">
          <svg viewBox="0 0 36 36" className="h-[34px] w-[36px]" fill="none">
            <path d="M18 4.500c8 0 12.500 6 12.500 13S26 30.500 17.500 30.500 5 24.500 5 17.500 10 4.500 18 4.500z" stroke="#79a82b" strokeWidth="7" />
            <path d="M18 17l6 1 11 12v5h-7L18 23z" fill="#5c9a2c" />
            <path d="M15 14l8 2-1 4 4 6-8-4-4 0z" fill="#ee7a30" />
            <path d="M19 20l7 7-3 1-6-6z" fill="#f3d13a" />
          </svg>
          <span className="ml-[9px] flex-1 text-[23.9px]">*Print Layout</span>
          <svg viewBox="0 0 230 24" className="mr-[41px] h-[24px] w-[230px]" fill="none" stroke="#111" strokeWidth="2">
            <path d="M1 12h20M208 2l21 21M229 2l-21 21" /><rect x="104" y="2" width="20" height="20" />
          </svg>
        </div>
        <div className="flex h-[45px] shrink-0 items-center border-b-2 border-[#d6d6d6] pl-[19px] pt-[2px] text-[25px]">
          {MENU.map(([u, t, w]) => (
            <div key={t} className={w + ' shrink-0 whitespace-nowrap'}><span className="underline decoration-2 underline-offset-4">{u}</span>{t}</div>
          ))}
        </div>
        <MainToolbar />
        <ActionsToolbar />
        <div className="flex h-[1272px] shrink-0">
          <ToolBox />
          <div className="flex h-full w-[1672px] shrink-0 flex-col">
            <TopRuler />
            <div className="flex h-[1227px] border-b-2 border-[#bdbdbd]">
              <SideRuler />
              <Sheet />
              <div className="flex w-[13px] flex-col items-center justify-center gap-[3px] pb-[37px]">
                {Array.from({ length: 6 }, (_, i) => <div key={i} className="size-[2px] bg-[#bdbdbd]" />)}
              </div>
            </div>
          </div>
          <div className="flex h-full flex-1 flex-col">
            <ItemsDock />
            <PropertiesDock />
          </div>
        </div>
        <div className={'flex flex-1 items-center pl-[11px] pt-[4px] text-[22.5px] ' + Tah}>
          <span className="w-[1549px] font-['Open_Sans',sans-serif] text-[25px] leading-none">1 item selected</span>
          <span className="w-[187px]">x: 276.024 mm</span>
          <span className="w-[188px]">y: 10.3158 mm</span>
          <span className="w-[188px]">page: 1</span>
          <div className="flex h-[43px] w-[230px] items-center rounded-[4px] border-2 border-[#b9b9b9] bg-white pl-[6px]">
            <span className="w-[171px]">58.9%</span>
            <Arrow d="M0 0h16L8 10z" c="h-[10px] w-[16px]" />
          </div>
        </div>
      </div>

      <svg className="absolute left-0 top-0 h-[1593px] w-[3246px]" viewBox="0 0 3246 1593" fill="none">
        <g className="drop-shadow-[5px_7px_5px_rgba(0,0,0,0.4)]">
          <rect x="1767" y="1280" width="117" height="54" rx="1" stroke="#c00000" strokeWidth="10" />
          <rect x="1923" y="1284" width="105" height="50" rx="1" stroke="#c00000" strokeWidth="10" />
          <rect x="2030" y="1284" width="56" height="54" rx="1" stroke="#c00000" strokeWidth="11" />
          <ArrowTo x1={2194} y1={639} x2={1829} y2={794} />
          <ArrowTo x1={2796} y1={986} x2={1979} y2={1285} />
          <ArrowTo x1={2316} y1={1528} x2={2063} y2={1340} />
          <ArrowTo x1={1248} y1={1483} x2={1766} y2={1308} />
        </g>
      </svg>
      <Callout c="left-[2190px] top-[505px] h-[169px] w-[863px]"><div>Unflag in order to manually modify</div><div>the legend items</div></Callout>
      <Callout c="left-[2346px] top-[884px] h-[103px] w-[900px]">Add or remove legend items</Callout>
      <Callout c="left-[2313px] top-[1477px] h-[103px] w-[901px]">Modify the layer name on the legend</Callout>
      <Callout c="left-[353px] top-[1435px] h-[103px] w-[900px]">Modify the order of the visible layers</Callout>
    </div>
  );
}
